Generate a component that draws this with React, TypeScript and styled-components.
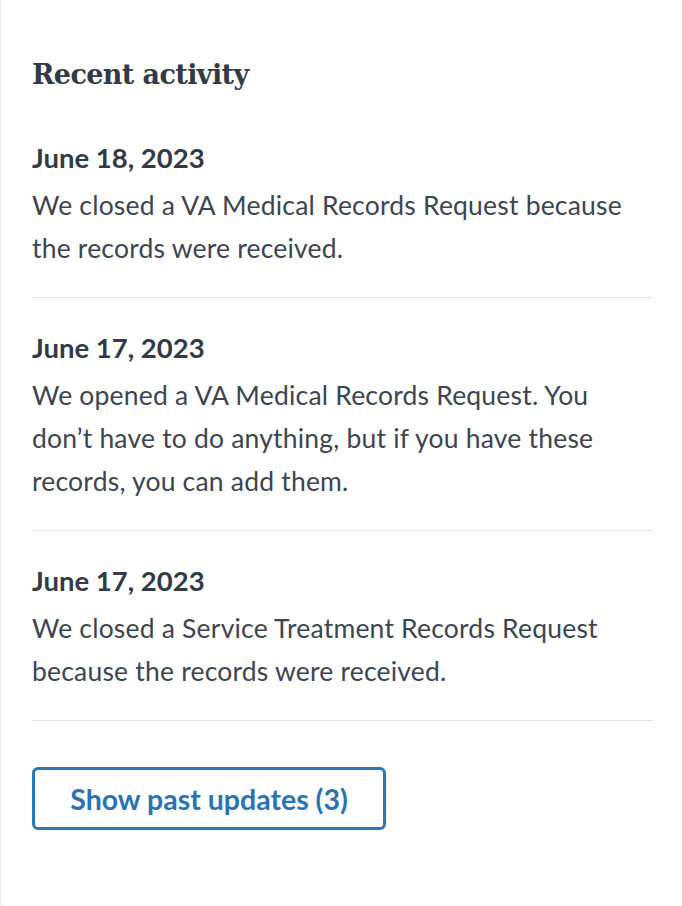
import React from "react";
import styled, { createGlobalStyle } from "styled-components";

const GlobalStyle = createGlobalStyle`
  html, body {
    margin: 0;
    padding: 0;
    background: #ffffff;
  }
  body {
    font-family: Lato, "Open Sans", sans-serif;
    color: #323a45;
  }
`;

type ActivityItem = {
  date: string;
  text: string;
};

const activity: ActivityItem[] = [
  {
    date: "June 18, 2023",
    text: "We closed a VA Medical Records Request because the records were received.",
  },
  {
    date: "June 17, 2023",
    text: "We opened a VA Medical Records Request. You don\u2019t have to do anything, but if you have these records, you can add them.",
  },
  {
    date: "June 17, 2023",
    text: "We closed a Service Treatment Records Request because the records were received.",
  },
];

const App = (): JSX.Element => {
  return (
    <>
      <GlobalStyle />
      <Panel>
        <Heading>Recent activity</Heading>
        <List>
          {activity.map((item, i) => (
            <Item key={i}>
              <DateLine>{item.date}</DateLine>
              <Description>{item.text}</Description>
            </Item>
          ))}
        </List>
        <PastButton type="button">Show past updates (3)</PastButton>
      </Panel>
    </>
  );
};

export default App;

const Panel = styled.section`
  min-height: 906px;
  box-sizing: border-box;
  border-left: 1px solid #ececec;
  padding: 55px 29px 40px 31px;
`;

const Heading = styled.h2`
  margin: 0 0 43px;
  font-family: "DejaVu Serif", "Liberation Serif", serif;
  font-weight: 700;
  font-size: 27px;
  line-height: 40px;
  letter-spacing: -0.6px;
  color: #323a45;
`;

const List = styled.ol`
  list-style: none;
  margin: 0;
  padding: 0;
`;

const Item = styled.li`
  padding: 0 0 27px;
  margin: 0 0 30px;
  border-bottom: 1px solid #dfe1e2;
`;

const DateLine = styled.h3`
  margin: 0 0 6px;
  font-size: 27.5px;
  font-weight: 700;
  line-height: 40px;
  color: #323a45;
`;

const Description = styled.p`
  margin: 0;
  font-size: 26.5px;
  line-height: 43px;
  letter-spacing: 0.2px;
  color: #3d4551;
`;

const PastButton = styled.button`
  display: inline-flex;
  align-items: center;
  justify-content: center;
  box-sizing: border-box;
  margin-top: 16px;
  height: 63px;
  width: 354px;
  padding: 0;
  border: 3px solid #2b77b7;
  border-radius: 6px;
  background: #ffffff;
  font-family: Lato, "Open Sans", sans-serif;
  font-size: 28.5px;
  font-weight: 700;
  color: #2a72b2;
  cursor: pointer;
`;
